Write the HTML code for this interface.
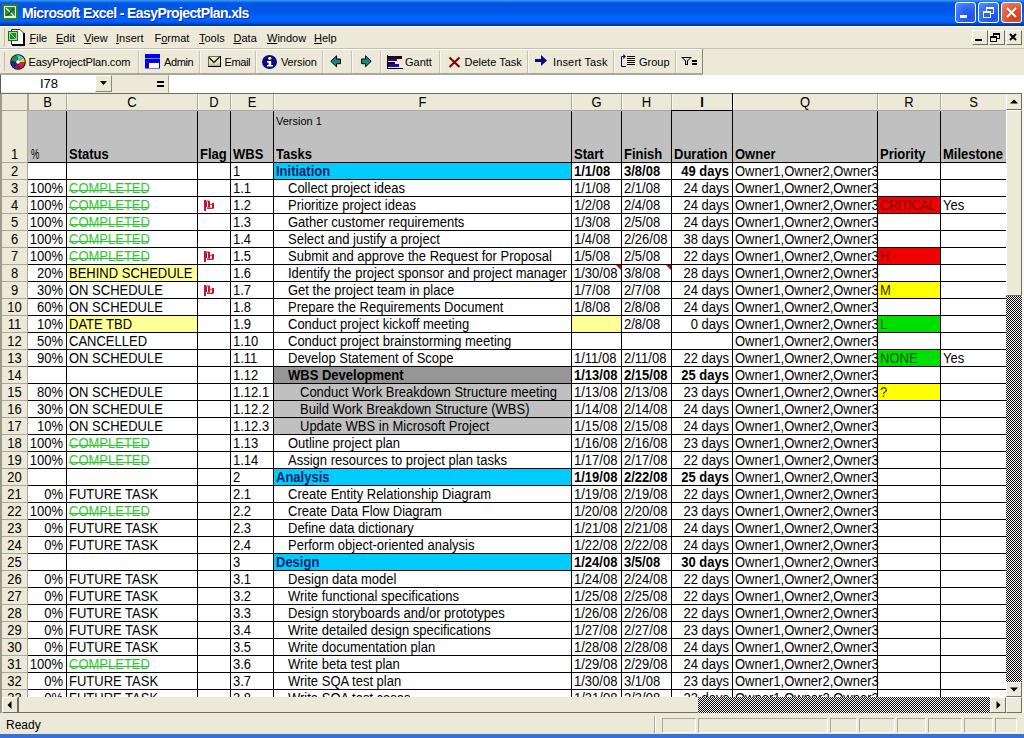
<!DOCTYPE html>
<html><head><meta charset="utf-8"><title>Microsoft Excel - EasyProjectPlan.xls</title>
<style>
html,body{margin:0;padding:0;}
body{width:1024px;height:738px;position:relative;overflow:hidden;background:#ECE9D8;font-family:"Liberation Sans", sans-serif;}
body>div,body>svg{position:absolute;}
.t{white-space:nowrap;color:#000;}
u{text-decoration:underline;text-underline-offset:1px;}
</style></head><body>
<div style="left:0;top:0;width:1024px;height:26px;background:linear-gradient(#3A9BFF 0px,#2A85F5 1px,#0A60E0 2.5px,#0055E0 4px,#0057E8 12px,#0064FF 17px,#0062FA 21px,#0050DD 23px,#003CB5 24.5px,#0030A0 26px);"></div>
<svg style="left:2px;top:4px" width="16" height="16" viewBox="0 0 16 16">
<rect x="0" y="0" width="16" height="16" fill="#2C7A3A"/>
<rect x="2" y="2" width="12" height="12" fill="#E6F2DC"/>
<rect x="3" y="3" width="10" height="10" fill="#2E8A3C"/>
<path d="M4 4 L12 12" stroke="#E6F2DC" stroke-width="1.3"/>
<path d="M4.5 12 L12 4.5" stroke="#1E5E28" stroke-width="1.5"/>
<rect x="3" y="12" width="10" height="2" fill="#E6F2DC"/>
</svg>
<div class="t" style="left:22px;top:4px;color:#fff;font-weight:bold;font-size:14px;line-height:19px;letter-spacing:-0.6px;text-shadow:1px 1px 0 #0A2A9A;">Microsoft Excel - EasyProjectPlan.xls</div>
<div style="left:955px;top:2px;width:21px;height:21px;border:1px solid #fff;border-radius:3px;background:radial-gradient(circle at 70% 75%,#1E50E8 0%,#2B64F2 45%,#5A90FF 100%);box-sizing:border-box;"></div>
<div style="left:978px;top:2px;width:21px;height:21px;border:1px solid #fff;border-radius:3px;background:radial-gradient(circle at 70% 75%,#1E50E8 0%,#2B64F2 45%,#5A90FF 100%);box-sizing:border-box;"></div>
<div style="left:1001px;top:2px;width:21px;height:21px;border:1px solid #fff;border-radius:3px;background:radial-gradient(circle at 70% 75%,#C8401E 0%,#E0583A 50%,#F08A70 100%);box-sizing:border-box;"></div>
<div style="left:960px;top:15px;width:7px;height:3px;background:#fff;"></div>
<svg style="left:982px;top:6px" width="13" height="13" viewBox="0 0 13 13"><rect x="4.5" y="1.5" width="7" height="6" fill="none" stroke="#fff" stroke-width="1"/><rect x="4" y="1" width="8" height="2" fill="#fff"/><rect x="1.5" y="5.5" width="7" height="6" fill="#2B64F2" stroke="#fff" stroke-width="1"/><rect x="1" y="5" width="8" height="2" fill="#fff"/></svg>
<svg style="left:1005px;top:6px" width="13" height="13" viewBox="0 0 13 13"><path d="M2 2 L11 11 M11 2 L2 11" stroke="#fff" stroke-width="2"/></svg>
<div style="left:0px;top:26px;width:1024px;height:23px;background:#ECE9D8;"></div>
<div style="left:0px;top:26px;width:1024px;height:1px;background:#FBFAF5;"></div>
<div style="left:0px;top:48px;width:1024px;height:1px;background:#C5C1AE;"></div>
<div style="left:4px;top:28px;width:1px;height:18px;background:#C1BDA8;"></div>
<div style="left:3px;top:45px;width:2px;height:1px;background:#C1BDA8;"></div>
<svg style="left:8px;top:29px" width="17" height="17" viewBox="0 0 17 17">
<path d="M3.5 0.5 H12 L15.5 4 V15.5 H3.5 Z" fill="#fff" stroke="#303030"/>
<rect x="4" y="15" width="12" height="2" fill="#000"/>
<rect x="15" y="4" width="2" height="13" fill="#000"/>
<rect x="0.5" y="2.5" width="9" height="9" fill="#9CE08C" stroke="#1E6B2A"/>
<rect x="2" y="4" width="6" height="6" fill="#1E8A2C"/>
<path d="M2 4 L8 10" stroke="#9CE08C" stroke-width="1"/>
</svg>
<div class="t" style="left:29.5px;top:31px;font-size:11px;line-height:14px;color:#000;"><u>F</u>ile</div>
<div class="t" style="left:56px;top:31px;font-size:11px;line-height:14px;color:#000;"><u>E</u>dit</div>
<div class="t" style="left:84px;top:31px;font-size:11px;line-height:14px;color:#000;"><u>V</u>iew</div>
<div class="t" style="left:116px;top:31px;font-size:11px;line-height:14px;color:#000;"><u>I</u>nsert</div>
<div class="t" style="left:154.5px;top:31px;font-size:11px;line-height:14px;color:#000;">F<u>o</u>rmat</div>
<div class="t" style="left:199px;top:31px;font-size:11px;line-height:14px;color:#000;"><u>T</u>ools</div>
<div class="t" style="left:233.5px;top:31px;font-size:11px;line-height:14px;color:#000;"><u>D</u>ata</div>
<div class="t" style="left:267px;top:31px;font-size:11px;line-height:14px;color:#000;"><u>W</u>indow</div>
<div class="t" style="left:314px;top:31px;font-size:11px;line-height:14px;color:#000;"><u>H</u>elp</div>
<div style="left:972px;top:30px;width:16px;height:15px;background:#ECE9D8;border-top:1px solid #fff;border-left:1px solid #fff;border-right:1px solid #716F64;border-bottom:1px solid #716F64;box-sizing:border-box;"></div>
<div style="left:989px;top:30px;width:16px;height:15px;background:#ECE9D8;border-top:1px solid #fff;border-left:1px solid #fff;border-right:1px solid #716F64;border-bottom:1px solid #716F64;box-sizing:border-box;"></div>
<div style="left:1006px;top:30px;width:16px;height:15px;background:#ECE9D8;border-top:1px solid #fff;border-left:1px solid #fff;border-right:1px solid #716F64;border-bottom:1px solid #716F64;box-sizing:border-box;"></div>
<div style="left:975px;top:39px;width:7px;height:2px;background:#000;"></div>
<svg style="left:990px;top:33px" width="10" height="9" viewBox="0 0 10 9"><rect x="3.5" y="0.5" width="6" height="5" fill="none" stroke="#000"/><rect x="3" y="0" width="7" height="2" fill="#000"/><rect x="0.5" y="3.5" width="6" height="5" fill="#ECE9D8" stroke="#000"/><rect x="0" y="3" width="7" height="2" fill="#000"/></svg>
<svg style="left:1009px;top:33px" width="8" height="8" viewBox="0 0 8 8"><path d="M1 1 L7 7 M7 1 L1 7" stroke="#000" stroke-width="2"/></svg>
<div style="left:0px;top:49px;width:702px;height:25px;background:#ECE9D8;border-top:1px solid #fff;border-bottom:1px solid #ACA899;box-sizing:border-box;"></div>
<div style="left:702px;top:49px;width:322px;height:25px;background:#ECE9D8;"></div>
<div style="left:702px;top:49px;width:1px;height:26px;background:#8C8975;"></div>
<div style="left:4px;top:52px;width:1px;height:19px;background:#C1BDA8;"></div>
<div style="left:138px;top:51px;width:1px;height:22px;background:#C5C2B2;"></div>
<div style="left:139px;top:51px;width:1px;height:22px;background:#FAF9F4;"></div>
<div style="left:199px;top:51px;width:1px;height:22px;background:#C5C2B2;"></div>
<div style="left:200px;top:51px;width:1px;height:22px;background:#FAF9F4;"></div>
<div style="left:255px;top:51px;width:1px;height:22px;background:#C5C2B2;"></div>
<div style="left:256px;top:51px;width:1px;height:22px;background:#FAF9F4;"></div>
<div style="left:322px;top:51px;width:1px;height:22px;background:#C5C2B2;"></div>
<div style="left:323px;top:51px;width:1px;height:22px;background:#FAF9F4;"></div>
<div style="left:351px;top:51px;width:1px;height:22px;background:#C5C2B2;"></div>
<div style="left:352px;top:51px;width:1px;height:22px;background:#FAF9F4;"></div>
<div style="left:380px;top:51px;width:1px;height:22px;background:#C5C2B2;"></div>
<div style="left:381px;top:51px;width:1px;height:22px;background:#FAF9F4;"></div>
<div style="left:439px;top:51px;width:1px;height:22px;background:#C5C2B2;"></div>
<div style="left:440px;top:51px;width:1px;height:22px;background:#FAF9F4;"></div>
<div style="left:527px;top:51px;width:1px;height:22px;background:#C5C2B2;"></div>
<div style="left:528px;top:51px;width:1px;height:22px;background:#FAF9F4;"></div>
<div style="left:613px;top:51px;width:1px;height:22px;background:#C5C2B2;"></div>
<div style="left:614px;top:51px;width:1px;height:22px;background:#FAF9F4;"></div>
<div style="left:675px;top:51px;width:1px;height:22px;background:#C5C2B2;"></div>
<div style="left:676px;top:51px;width:1px;height:22px;background:#FAF9F4;"></div>
<svg style="left:10px;top:54px" width="16" height="16" viewBox="0 0 16 16">
<circle cx="8" cy="8" r="7.8" fill="#000"/>
<path d="M8 8 L7 1 A7 7 0 0 1 13.5 3.8 Z" fill="#33D0E0"/>
<path d="M8 8 L13.5 3.8 A7 7 0 0 1 14.8 8 Z" fill="#F0D820"/>
<path d="M8 8 L14.8 8 A7 7 0 0 1 10 14.7 Z" fill="#D02040"/>
<path d="M8 8 L10 14.7 A7 7 0 0 1 4 13.8 Z" fill="#901850"/>
<path d="M8 8 L4 13.8 A7 7 0 0 1 1.2 7 Z" fill="#2020A8"/>
<path d="M8 8 L1.2 7 A7 7 0 0 1 7 1 Z" fill="#20903A"/>
<circle cx="8" cy="8" r="1.8" fill="#fff"/>
</svg>
<div class="t" style="left:28.5px;top:55px;font-size:11px;line-height:14px;color:#000;letter-spacing:-0.15px;">EasyProjectPlan.com</div>
<svg style="left:145px;top:54px" width="15" height="15" viewBox="0 0 15 15"><rect x="0" y="0" width="15" height="14.5" fill="#0000F0"/><rect x="0" y="4" width="15" height="1" fill="#8080FF"/><rect x="4" y="9" width="10" height="5" fill="#fff"/></svg>
<div class="t" style="left:164px;top:55px;font-size:11px;line-height:14px;color:#000;letter-spacing:-0.4px;">Admin</div>
<svg style="left:208px;top:56px" width="13" height="11" viewBox="0 0 13 11"><defs><linearGradient id="em" x1="0" y1="0" x2="0" y2="1"><stop offset="0" stop-color="#F4F4C8"/><stop offset="0.6" stop-color="#E4E4B8"/><stop offset="1" stop-color="#A0A090"/></linearGradient></defs><rect x="0" y="0" width="13" height="11" fill="url(#em)"/><path d="M0.5 10.5 V0.5 H12" fill="none" stroke="#707060"/><rect x="12" y="0" width="1.2" height="11" fill="#000"/><rect x="0" y="10" width="13" height="1.2" fill="#000"/><path d="M1 1.5 L6 6.5 L11.5 1" fill="none" stroke="#000" stroke-width="1.1"/></svg>
<div class="t" style="left:224.5px;top:55px;font-size:11px;line-height:14px;color:#000;letter-spacing:-0.4px;">Email</div>
<svg style="left:262px;top:55px" width="15" height="14" viewBox="0 0 15 14"><ellipse cx="7.5" cy="7" rx="7.5" ry="7" fill="#0A0A80"/><ellipse cx="7.8" cy="3.4" rx="1.6" ry="1.3" fill="#fff"/><path d="M5 6 H9.2 V10 H11 V11.6 H5 V10 H6.5 V7.4 H5 Z" fill="#fff"/></svg>
<div class="t" style="left:281px;top:55px;font-size:11px;line-height:14px;color:#000;letter-spacing:-0.15px;">Version</div>
<svg style="left:330px;top:55px" width="12" height="13" viewBox="0 0 12 13"><path d="M0.8 6.3 L6.5 0.8 V4 H10.5 V8.7 H6.5 V11.8 Z" fill="#108888" stroke="#000" stroke-width="1"/></svg>
<svg style="left:360px;top:55px" width="12" height="13" viewBox="0 0 12 13"><path d="M11.2 6.3 L5.5 0.8 V4 H1.5 V8.7 H5.5 V11.8 Z" fill="#108888" stroke="#000" stroke-width="1"/></svg>
<svg style="left:387px;top:55px" width="17" height="14" viewBox="0 0 17 14"><rect x="0" y="0" width="1" height="14" fill="#000"/><rect x="1" y="1" width="14" height="3" fill="#2A0010"/><rect x="1" y="4" width="9" height="2" fill="#1A10A0"/><rect x="1" y="7" width="7" height="2" fill="#2A0010"/><rect x="1" y="9" width="11" height="3" fill="#1A10A0"/><rect x="0" y="13" width="16" height="1" fill="#000"/></svg>
<div class="t" style="left:405px;top:55px;font-size:11px;line-height:14px;color:#000;">Gantt</div>
<svg style="left:448px;top:56px" width="13" height="12" viewBox="0 0 13 12"><path d="M1.5 1.5 L11.5 11 M11.5 1.5 L1.5 11" stroke="#7A0000" stroke-width="2"/></svg>
<div class="t" style="left:464.5px;top:55px;font-size:11px;line-height:14px;color:#000;">Delete Task</div>
<svg style="left:535px;top:55px" width="13" height="11" viewBox="0 0 13 11"><path d="M0 4 H6 V0 L12 5.5 L6 11 V7 H0 Z" fill="#0A0A80"/></svg>
<div class="t" style="left:553px;top:55px;font-size:11px;line-height:14px;color:#000;letter-spacing:0.15px;">Insert Task</div>
<svg style="left:620px;top:53px" width="16" height="15" viewBox="0 0 16 15"><path d="M1.5 13.5 V3.5 H4" fill="none" stroke="#0A0A50" stroke-width="1"/><path d="M1.5 13.5 H6" fill="none" stroke="#0A0A50" stroke-width="1"/><path d="M3.3 1 L6 3.5 L3.3 6 Z" fill="#0A0A50"/><rect x="7" y="3" width="8" height="1" fill="#000"/><rect x="7" y="5" width="8" height="1" fill="#000"/><rect x="7" y="7" width="8" height="1" fill="#000"/><rect x="7" y="9" width="8" height="1" fill="#000"/><rect x="7" y="11" width="8" height="1" fill="#000"/></svg>
<div class="t" style="left:639px;top:55px;font-size:11px;line-height:14px;color:#000;">Group</div>
<svg style="left:681px;top:56px" width="16" height="10" viewBox="0 0 16 10"><path d="M0 1 H11 L7 5 V9 H4 V5 Z" fill="#000"/><path d="M2 2 H9 L6 4.8 V8 H5 V4.8 Z" fill="#D8D8D8"/><rect x="11" y="4" width="5" height="2" fill="#000"/><rect x="11" y="7" width="5" height="2" fill="#000"/></svg>
<div style="left:0px;top:74px;width:1024px;height:19px;background:#ECE9D8;"></div>
<div style="left:0px;top:74px;width:702px;height:1px;background:#ACA899;"></div>
<div style="left:1px;top:75px;width:95px;height:17px;background:#fff;"></div>
<div style="left:0px;top:75px;width:1px;height:18px;background:#5A5850;"></div>
<div class="t" style="left:40px;top:76px;font-size:13px;line-height:16px;color:#000;">I78</div>
<div style="left:95px;top:75px;width:17px;height:17px;background:#ECE9D8;border-top:1px solid #fff;border-left:1px solid #fff;border-right:1px solid #8C8975;border-bottom:1px solid #8C8975;box-sizing:border-box;"></div>
<svg style="left:100px;top:81px" width="7" height="4" viewBox="0 0 7 4"><path d="M0 0 H7 L3.5 4 Z" fill="#000"/></svg>
<div style="left:157px;top:81px;width:7px;height:2px;background:#000;"></div>
<div style="left:157px;top:85px;width:7px;height:2px;background:#000;"></div>
<div style="left:168px;top:75px;width:856px;height:18px;background:#fff;"></div>
<div style="left:168px;top:75px;width:1px;height:18px;background:#ACA899;"></div>
<div style="left:0px;top:93px;width:1006px;height:604px;background:#fff;"></div>
<div style="left:0px;top:93px;width:2px;height:620px;background:#9D9A8A;"></div>
<div style="left:0px;top:93px;width:1024px;height:1px;background:#716F64;"></div>
<div style="left:2px;top:94px;width:1004px;height:16px;background:#ECE9D8;"></div>
<div style="left:2px;top:110px;width:1004px;height:1px;background:#ACA899;"></div>
<div style="left:2px;top:111px;width:25px;height:586px;background:#ECE9D8;"></div>
<div style="left:27px;top:94px;width:2px;height:17px;background:#ACA899;"></div>
<div style="left:27px;top:111px;width:1px;height:586px;background:#ACA899;"></div>
<div class="t" style="left:29px;top:95px;width:37px;font-size:13px;line-height:16px;text-align:center;transform:scaleY(1.1);transform-origin:0 12px;">B</div>
<div style="left:66px;top:94px;width:1px;height:16px;background:#ACA899;"></div>
<div style="left:67px;top:94px;width:1px;height:16px;background:#FAF9F2;"></div>
<div class="t" style="left:67px;top:95px;width:130px;font-size:13px;line-height:16px;text-align:center;transform:scaleY(1.1);transform-origin:0 12px;">C</div>
<div style="left:197px;top:94px;width:1px;height:16px;background:#ACA899;"></div>
<div style="left:198px;top:94px;width:1px;height:16px;background:#FAF9F2;"></div>
<div class="t" style="left:198px;top:95px;width:32px;font-size:13px;line-height:16px;text-align:center;transform:scaleY(1.1);transform-origin:0 12px;">D</div>
<div style="left:230px;top:94px;width:1px;height:16px;background:#ACA899;"></div>
<div style="left:231px;top:94px;width:1px;height:16px;background:#FAF9F2;"></div>
<div class="t" style="left:231px;top:95px;width:42px;font-size:13px;line-height:16px;text-align:center;transform:scaleY(1.1);transform-origin:0 12px;">E</div>
<div style="left:273px;top:94px;width:1px;height:16px;background:#ACA899;"></div>
<div style="left:274px;top:94px;width:1px;height:16px;background:#FAF9F2;"></div>
<div class="t" style="left:274px;top:95px;width:297px;font-size:13px;line-height:16px;text-align:center;transform:scaleY(1.1);transform-origin:0 12px;">F</div>
<div style="left:571px;top:94px;width:1px;height:16px;background:#ACA899;"></div>
<div style="left:572px;top:94px;width:1px;height:16px;background:#FAF9F2;"></div>
<div class="t" style="left:572px;top:95px;width:49px;font-size:13px;line-height:16px;text-align:center;transform:scaleY(1.1);transform-origin:0 12px;">G</div>
<div style="left:621px;top:94px;width:1px;height:16px;background:#ACA899;"></div>
<div style="left:622px;top:94px;width:1px;height:16px;background:#FAF9F2;"></div>
<div class="t" style="left:622px;top:95px;width:49px;font-size:13px;line-height:16px;text-align:center;transform:scaleY(1.1);transform-origin:0 12px;">H</div>
<div style="left:671px;top:94px;width:1px;height:16px;background:#ACA899;"></div>
<div style="left:672px;top:94px;width:1px;height:16px;background:#FAF9F2;"></div>
<div class="t" style="left:672px;top:95px;width:60px;font-size:13px;line-height:16px;text-align:center;transform:scaleY(1.1);transform-origin:0 12px;font-weight:bold;">I</div>
<div style="left:732px;top:94px;width:1px;height:16px;background:#ACA899;"></div>
<div style="left:733px;top:94px;width:1px;height:16px;background:#FAF9F2;"></div>
<div class="t" style="left:733px;top:95px;width:144px;font-size:13px;line-height:16px;text-align:center;transform:scaleY(1.1);transform-origin:0 12px;">Q</div>
<div style="left:877px;top:94px;width:1px;height:16px;background:#ACA899;"></div>
<div style="left:878px;top:94px;width:1px;height:16px;background:#FAF9F2;"></div>
<div class="t" style="left:878px;top:95px;width:62px;font-size:13px;line-height:16px;text-align:center;transform:scaleY(1.1);transform-origin:0 12px;">R</div>
<div style="left:940px;top:94px;width:1px;height:16px;background:#ACA899;"></div>
<div style="left:941px;top:94px;width:1px;height:16px;background:#FAF9F2;"></div>
<div class="t" style="left:941px;top:95px;width:65px;font-size:13px;line-height:16px;text-align:center;transform:scaleY(1.1);transform-origin:0 12px;">S</div>
<div style="left:671px;top:110px;width:62px;height:1px;background:#000;"></div>
<div style="left:732px;top:93px;width:1px;height:18px;background:#000;"></div>
<div style="left:28px;top:111px;width:978px;height:51px;background:#C0C0C0;"></div>
<div class="t" style="left:31px;top:146px;font-size:13px;line-height:17px;color:#000;transform:scaleY(1.1);transform-origin:0 13px;transform:scale(0.72,1.1);transform-origin:0 13px;">%</div>
<div class="t" style="left:69px;top:146px;font-size:13px;line-height:17px;color:#000;transform:scaleY(1.1);transform-origin:0 13px;font-weight:bold;">Status</div>
<div class="t" style="left:200px;top:146px;font-size:13px;line-height:17px;color:#000;transform:scaleY(1.1);transform-origin:0 13px;font-weight:bold;">Flag</div>
<div class="t" style="left:233px;top:146px;font-size:13px;line-height:17px;color:#000;transform:scaleY(1.1);transform-origin:0 13px;font-weight:bold;">WBS</div>
<div class="t" style="left:276px;top:146px;font-size:13px;line-height:17px;color:#000;transform:scaleY(1.1);transform-origin:0 13px;font-weight:bold;">Tasks</div>
<div class="t" style="left:574px;top:146px;font-size:13px;line-height:17px;color:#000;transform:scaleY(1.1);transform-origin:0 13px;font-weight:bold;">Start</div>
<div class="t" style="left:624px;top:146px;font-size:13px;line-height:17px;color:#000;transform:scaleY(1.1);transform-origin:0 13px;font-weight:bold;">Finish</div>
<div class="t" style="left:674px;top:146px;font-size:13px;line-height:17px;color:#000;transform:scaleY(1.1);transform-origin:0 13px;font-weight:bold;">Duration</div>
<div class="t" style="left:735px;top:146px;font-size:13px;line-height:17px;color:#000;transform:scaleY(1.1);transform-origin:0 13px;font-weight:bold;">Owner</div>
<div class="t" style="left:880px;top:146px;font-size:13px;line-height:17px;color:#000;transform:scaleY(1.1);transform-origin:0 13px;font-weight:bold;">Priority</div>
<div class="t" style="left:943px;top:146px;font-size:13px;line-height:17px;color:#000;transform:scaleY(1.1);transform-origin:0 13px;font-weight:bold;">Milestone</div>
<div class="t" style="left:276px;top:114px;font-size:11px;line-height:14px;">Version 1</div>
<div class="t" style="left:2px;top:146px;width:25px;font-size:13px;line-height:17px;color:#000;transform:scaleY(1.1);transform-origin:0 13px;text-align:center;">1</div>
<div class="t" style="left:2px;top:163px;width:25px;font-size:13px;line-height:17px;color:#000;transform:scaleY(1.1);transform-origin:0 13px;text-align:center;">2</div>
<div class="t" style="left:233px;top:163px;font-size:13px;line-height:17px;color:#000;transform:scaleY(1.1);transform-origin:0 13px;">1</div>
<div style="left:274px;top:163px;width:297px;height:16px;background:#00CCFF;"></div>
<div class="t" style="left:276px;top:163px;font-size:13px;line-height:17px;color:#000;transform:scaleY(1.1);transform-origin:0 13px;font-weight:bold;color:#001F60;">Initiation</div>
<div class="t" style="left:574px;top:163px;font-size:13px;line-height:17px;color:#000;transform:scaleY(1.1);transform-origin:0 13px;font-weight:bold;">1/1/08</div>
<div class="t" style="left:624px;top:163px;font-size:13px;line-height:17px;color:#000;transform:scaleY(1.1);transform-origin:0 13px;font-weight:bold;">3/8/08</div>
<div class="t" style="left:671px;top:163px;width:58px;font-size:13px;line-height:17px;color:#000;transform:scaleY(1.1);transform-origin:0 13px;font-weight:bold;text-align:right;">49 days</div>
<div class="t" style="left:735px;top:163px;font-size:13px;line-height:17px;color:#000;transform:scaleY(1.1);transform-origin:0 13px;">Owner1,Owner2,Owner3</div>
<div class="t" style="left:2px;top:180px;width:25px;font-size:13px;line-height:17px;color:#000;transform:scaleY(1.1);transform-origin:0 13px;text-align:center;">3</div>
<div class="t" style="left:28px;top:180px;width:35px;font-size:13px;line-height:17px;color:#000;transform:scaleY(1.1);transform-origin:0 13px;text-align:right;">100%</div>
<div class="t" style="left:69px;top:180px;font-size:13px;line-height:17px;color:#000;transform:scaleY(1.1);transform-origin:0 13px;color:#33C833;">COMPLETED</div>
<div style="left:69px;top:190px;width:80px;height:1px;background:#33C833;"></div>
<div class="t" style="left:233px;top:180px;font-size:13px;line-height:17px;color:#000;transform:scaleY(1.1);transform-origin:0 13px;">1.1</div>
<div class="t" style="left:288px;top:180px;font-size:13px;line-height:17px;color:#000;transform:scaleY(1.1);transform-origin:0 13px;">Collect project ideas</div>
<div class="t" style="left:574px;top:180px;font-size:13px;line-height:17px;color:#000;transform:scaleY(1.1);transform-origin:0 13px;">1/1/08</div>
<div class="t" style="left:624px;top:180px;font-size:13px;line-height:17px;color:#000;transform:scaleY(1.1);transform-origin:0 13px;">2/1/08</div>
<div class="t" style="left:671px;top:180px;width:58px;font-size:13px;line-height:17px;color:#000;transform:scaleY(1.1);transform-origin:0 13px;text-align:right;">24 days</div>
<div class="t" style="left:735px;top:180px;font-size:13px;line-height:17px;color:#000;transform:scaleY(1.1);transform-origin:0 13px;">Owner1,Owner2,Owner3</div>
<div class="t" style="left:2px;top:197px;width:25px;font-size:13px;line-height:17px;color:#000;transform:scaleY(1.1);transform-origin:0 13px;text-align:center;">4</div>
<div class="t" style="left:28px;top:197px;width:35px;font-size:13px;line-height:17px;color:#000;transform:scaleY(1.1);transform-origin:0 13px;text-align:right;">100%</div>
<div class="t" style="left:69px;top:197px;font-size:13px;line-height:17px;color:#000;transform:scaleY(1.1);transform-origin:0 13px;color:#33C833;">COMPLETED</div>
<div style="left:69px;top:207px;width:80px;height:1px;background:#33C833;"></div>
<svg style="left:200px;top:197px" width="18" height="16" viewBox="0 0 18 16"><rect x="4" y="3" width="2" height="11" fill="#D0103A"/><rect x="6" y="3.6" width="3.5" height="1" fill="#A01028"/><rect x="8" y="4" width="2" height="6" fill="#D0103A"/><rect x="6" y="5" width="1" height="5" fill="#B01030"/><rect x="7" y="10.4" width="6" height="1.4" fill="#901020"/><rect x="10" y="6.8" width="2.5" height="1" fill="#A01028"/><rect x="12" y="6" width="2" height="5.5" fill="#D0103A"/><rect x="10" y="7.8" width="2" height="2.6" fill="#FFF2C0"/></svg>
<div class="t" style="left:233px;top:197px;font-size:13px;line-height:17px;color:#000;transform:scaleY(1.1);transform-origin:0 13px;">1.2</div>
<div class="t" style="left:288px;top:197px;font-size:13px;line-height:17px;color:#000;transform:scaleY(1.1);transform-origin:0 13px;">Prioritize project ideas</div>
<div class="t" style="left:574px;top:197px;font-size:13px;line-height:17px;color:#000;transform:scaleY(1.1);transform-origin:0 13px;">1/2/08</div>
<div class="t" style="left:624px;top:197px;font-size:13px;line-height:17px;color:#000;transform:scaleY(1.1);transform-origin:0 13px;">2/4/08</div>
<div class="t" style="left:671px;top:197px;width:58px;font-size:13px;line-height:17px;color:#000;transform:scaleY(1.1);transform-origin:0 13px;text-align:right;">24 days</div>
<div class="t" style="left:735px;top:197px;font-size:13px;line-height:17px;color:#000;transform:scaleY(1.1);transform-origin:0 13px;">Owner1,Owner2,Owner3</div>
<div style="left:878px;top:197px;width:62px;height:16px;background:#F00000;"></div>
<div class="t" style="left:880px;top:197px;font-size:13px;line-height:17px;color:#000;transform:scaleY(1.1);transform-origin:0 13px;color:#800000;letter-spacing:-0.5px;">CRITICAL</div>
<div class="t" style="left:943px;top:197px;font-size:13px;line-height:17px;color:#000;transform:scaleY(1.1);transform-origin:0 13px;">Yes</div>
<div class="t" style="left:2px;top:214px;width:25px;font-size:13px;line-height:17px;color:#000;transform:scaleY(1.1);transform-origin:0 13px;text-align:center;">5</div>
<div class="t" style="left:28px;top:214px;width:35px;font-size:13px;line-height:17px;color:#000;transform:scaleY(1.1);transform-origin:0 13px;text-align:right;">100%</div>
<div class="t" style="left:69px;top:214px;font-size:13px;line-height:17px;color:#000;transform:scaleY(1.1);transform-origin:0 13px;color:#33C833;">COMPLETED</div>
<div style="left:69px;top:224px;width:80px;height:1px;background:#33C833;"></div>
<div class="t" style="left:233px;top:214px;font-size:13px;line-height:17px;color:#000;transform:scaleY(1.1);transform-origin:0 13px;">1.3</div>
<div class="t" style="left:288px;top:214px;font-size:13px;line-height:17px;color:#000;transform:scaleY(1.1);transform-origin:0 13px;">Gather customer requirements</div>
<div class="t" style="left:574px;top:214px;font-size:13px;line-height:17px;color:#000;transform:scaleY(1.1);transform-origin:0 13px;">1/3/08</div>
<div class="t" style="left:624px;top:214px;font-size:13px;line-height:17px;color:#000;transform:scaleY(1.1);transform-origin:0 13px;">2/5/08</div>
<div class="t" style="left:671px;top:214px;width:58px;font-size:13px;line-height:17px;color:#000;transform:scaleY(1.1);transform-origin:0 13px;text-align:right;">24 days</div>
<div class="t" style="left:735px;top:214px;font-size:13px;line-height:17px;color:#000;transform:scaleY(1.1);transform-origin:0 13px;">Owner1,Owner2,Owner3</div>
<div class="t" style="left:2px;top:231px;width:25px;font-size:13px;line-height:17px;color:#000;transform:scaleY(1.1);transform-origin:0 13px;text-align:center;">6</div>
<div class="t" style="left:28px;top:231px;width:35px;font-size:13px;line-height:17px;color:#000;transform:scaleY(1.1);transform-origin:0 13px;text-align:right;">100%</div>
<div class="t" style="left:69px;top:231px;font-size:13px;line-height:17px;color:#000;transform:scaleY(1.1);transform-origin:0 13px;color:#33C833;">COMPLETED</div>
<div style="left:69px;top:241px;width:80px;height:1px;background:#33C833;"></div>
<div class="t" style="left:233px;top:231px;font-size:13px;line-height:17px;color:#000;transform:scaleY(1.1);transform-origin:0 13px;">1.4</div>
<div class="t" style="left:288px;top:231px;font-size:13px;line-height:17px;color:#000;transform:scaleY(1.1);transform-origin:0 13px;">Select and justify a project</div>
<div class="t" style="left:574px;top:231px;font-size:13px;line-height:17px;color:#000;transform:scaleY(1.1);transform-origin:0 13px;">1/4/08</div>
<div class="t" style="left:624px;top:231px;font-size:13px;line-height:17px;color:#000;transform:scaleY(1.1);transform-origin:0 13px;">2/26/08</div>
<div class="t" style="left:671px;top:231px;width:58px;font-size:13px;line-height:17px;color:#000;transform:scaleY(1.1);transform-origin:0 13px;text-align:right;">38 days</div>
<div class="t" style="left:735px;top:231px;font-size:13px;line-height:17px;color:#000;transform:scaleY(1.1);transform-origin:0 13px;">Owner1,Owner2,Owner3</div>
<div class="t" style="left:2px;top:248px;width:25px;font-size:13px;line-height:17px;color:#000;transform:scaleY(1.1);transform-origin:0 13px;text-align:center;">7</div>
<div class="t" style="left:28px;top:248px;width:35px;font-size:13px;line-height:17px;color:#000;transform:scaleY(1.1);transform-origin:0 13px;text-align:right;">100%</div>
<div class="t" style="left:69px;top:248px;font-size:13px;line-height:17px;color:#000;transform:scaleY(1.1);transform-origin:0 13px;color:#33C833;">COMPLETED</div>
<div style="left:69px;top:258px;width:80px;height:1px;background:#33C833;"></div>
<svg style="left:200px;top:248px" width="18" height="16" viewBox="0 0 18 16"><rect x="4" y="3" width="2" height="11" fill="#D0103A"/><rect x="6" y="3.6" width="3.5" height="1" fill="#A01028"/><rect x="8" y="4" width="2" height="6" fill="#D0103A"/><rect x="6" y="5" width="1" height="5" fill="#B01030"/><rect x="7" y="10.4" width="6" height="1.4" fill="#901020"/><rect x="10" y="6.8" width="2.5" height="1" fill="#A01028"/><rect x="12" y="6" width="2" height="5.5" fill="#D0103A"/><rect x="10" y="7.8" width="2" height="2.6" fill="#FFF2C0"/></svg>
<div class="t" style="left:233px;top:248px;font-size:13px;line-height:17px;color:#000;transform:scaleY(1.1);transform-origin:0 13px;">1.5</div>
<div class="t" style="left:288px;top:248px;font-size:13px;line-height:17px;color:#000;transform:scaleY(1.1);transform-origin:0 13px;">Submit and approve the Request for Proposal</div>
<div class="t" style="left:574px;top:248px;font-size:13px;line-height:17px;color:#000;transform:scaleY(1.1);transform-origin:0 13px;">1/5/08</div>
<div class="t" style="left:624px;top:248px;font-size:13px;line-height:17px;color:#000;transform:scaleY(1.1);transform-origin:0 13px;">2/5/08</div>
<div class="t" style="left:671px;top:248px;width:58px;font-size:13px;line-height:17px;color:#000;transform:scaleY(1.1);transform-origin:0 13px;text-align:right;">22 days</div>
<div class="t" style="left:735px;top:248px;font-size:13px;line-height:17px;color:#000;transform:scaleY(1.1);transform-origin:0 13px;">Owner1,Owner2,Owner3</div>
<div style="left:878px;top:248px;width:62px;height:16px;background:#F00000;"></div>
<div class="t" style="left:880px;top:248px;font-size:13px;line-height:17px;color:#000;transform:scaleY(1.1);transform-origin:0 13px;color:#800000;">H</div>
<div class="t" style="left:2px;top:265px;width:25px;font-size:13px;line-height:17px;color:#000;transform:scaleY(1.1);transform-origin:0 13px;text-align:center;">8</div>
<div class="t" style="left:28px;top:265px;width:35px;font-size:13px;line-height:17px;color:#000;transform:scaleY(1.1);transform-origin:0 13px;text-align:right;">20%</div>
<div style="left:67px;top:265px;width:130px;height:16px;background:#FFFF99;"></div>
<div class="t" style="left:69px;top:265px;font-size:13px;line-height:17px;color:#000;transform:scaleY(1.1);transform-origin:0 13px;">BEHIND SCHEDULE</div>
<div class="t" style="left:233px;top:265px;font-size:13px;line-height:17px;color:#000;transform:scaleY(1.1);transform-origin:0 13px;">1.6</div>
<div class="t" style="left:288px;top:265px;font-size:13px;line-height:17px;color:#000;transform:scaleY(1.1);transform-origin:0 13px;">Identify the project sponsor and project manager</div>
<div class="t" style="left:574px;top:265px;font-size:13px;line-height:17px;color:#000;transform:scaleY(1.1);transform-origin:0 13px;">1/30/08</div>
<div class="t" style="left:624px;top:265px;font-size:13px;line-height:17px;color:#000;transform:scaleY(1.1);transform-origin:0 13px;">3/8/08</div>
<div class="t" style="left:671px;top:265px;width:58px;font-size:13px;line-height:17px;color:#000;transform:scaleY(1.1);transform-origin:0 13px;text-align:right;">28 days</div>
<div class="t" style="left:735px;top:265px;font-size:13px;line-height:17px;color:#000;transform:scaleY(1.1);transform-origin:0 13px;">Owner1,Owner2,Owner3</div>
<svg style="left:616px;top:265px" width="5" height="5" viewBox="0 0 5 5"><path d="M0 0 H5 V5 Z" fill="#C00000"/></svg>
<svg style="left:666px;top:265px" width="5" height="5" viewBox="0 0 5 5"><path d="M0 0 H5 V5 Z" fill="#C00000"/></svg>
<div class="t" style="left:2px;top:282px;width:25px;font-size:13px;line-height:17px;color:#000;transform:scaleY(1.1);transform-origin:0 13px;text-align:center;">9</div>
<div class="t" style="left:28px;top:282px;width:35px;font-size:13px;line-height:17px;color:#000;transform:scaleY(1.1);transform-origin:0 13px;text-align:right;">30%</div>
<div class="t" style="left:69px;top:282px;font-size:13px;line-height:17px;color:#000;transform:scaleY(1.1);transform-origin:0 13px;">ON SCHEDULE</div>
<svg style="left:200px;top:282px" width="18" height="16" viewBox="0 0 18 16"><rect x="4" y="3" width="2" height="11" fill="#D0103A"/><rect x="6" y="3.6" width="3.5" height="1" fill="#A01028"/><rect x="8" y="4" width="2" height="6" fill="#D0103A"/><rect x="6" y="5" width="1" height="5" fill="#B01030"/><rect x="7" y="10.4" width="6" height="1.4" fill="#901020"/><rect x="10" y="6.8" width="2.5" height="1" fill="#A01028"/><rect x="12" y="6" width="2" height="5.5" fill="#D0103A"/><rect x="10" y="7.8" width="2" height="2.6" fill="#FFF2C0"/></svg>
<div class="t" style="left:233px;top:282px;font-size:13px;line-height:17px;color:#000;transform:scaleY(1.1);transform-origin:0 13px;">1.7</div>
<div class="t" style="left:288px;top:282px;font-size:13px;line-height:17px;color:#000;transform:scaleY(1.1);transform-origin:0 13px;">Get the project team in place</div>
<div class="t" style="left:574px;top:282px;font-size:13px;line-height:17px;color:#000;transform:scaleY(1.1);transform-origin:0 13px;">1/7/08</div>
<div class="t" style="left:624px;top:282px;font-size:13px;line-height:17px;color:#000;transform:scaleY(1.1);transform-origin:0 13px;">2/7/08</div>
<div class="t" style="left:671px;top:282px;width:58px;font-size:13px;line-height:17px;color:#000;transform:scaleY(1.1);transform-origin:0 13px;text-align:right;">24 days</div>
<div class="t" style="left:735px;top:282px;font-size:13px;line-height:17px;color:#000;transform:scaleY(1.1);transform-origin:0 13px;">Owner1,Owner2,Owner3</div>
<div style="left:878px;top:282px;width:62px;height:16px;background:#FFFF00;"></div>
<div class="t" style="left:880px;top:282px;font-size:13px;line-height:17px;color:#000;transform:scaleY(1.1);transform-origin:0 13px;color:#333300;">M</div>
<div class="t" style="left:2px;top:299px;width:25px;font-size:13px;line-height:17px;color:#000;transform:scaleY(1.1);transform-origin:0 13px;text-align:center;">10</div>
<div class="t" style="left:28px;top:299px;width:35px;font-size:13px;line-height:17px;color:#000;transform:scaleY(1.1);transform-origin:0 13px;text-align:right;">60%</div>
<div class="t" style="left:69px;top:299px;font-size:13px;line-height:17px;color:#000;transform:scaleY(1.1);transform-origin:0 13px;">ON SCHEDULE</div>
<div class="t" style="left:233px;top:299px;font-size:13px;line-height:17px;color:#000;transform:scaleY(1.1);transform-origin:0 13px;">1.8</div>
<div class="t" style="left:288px;top:299px;font-size:13px;line-height:17px;color:#000;transform:scaleY(1.1);transform-origin:0 13px;">Prepare the Requirements Document</div>
<div class="t" style="left:574px;top:299px;font-size:13px;line-height:17px;color:#000;transform:scaleY(1.1);transform-origin:0 13px;">1/8/08</div>
<div class="t" style="left:624px;top:299px;font-size:13px;line-height:17px;color:#000;transform:scaleY(1.1);transform-origin:0 13px;">2/8/08</div>
<div class="t" style="left:671px;top:299px;width:58px;font-size:13px;line-height:17px;color:#000;transform:scaleY(1.1);transform-origin:0 13px;text-align:right;">24 days</div>
<div class="t" style="left:735px;top:299px;font-size:13px;line-height:17px;color:#000;transform:scaleY(1.1);transform-origin:0 13px;">Owner1,Owner2,Owner3</div>
<div class="t" style="left:2px;top:316px;width:25px;font-size:13px;line-height:17px;color:#000;transform:scaleY(1.1);transform-origin:0 13px;text-align:center;">11</div>
<div class="t" style="left:28px;top:316px;width:35px;font-size:13px;line-height:17px;color:#000;transform:scaleY(1.1);transform-origin:0 13px;text-align:right;">10%</div>
<div style="left:67px;top:316px;width:130px;height:16px;background:#FFFF99;"></div>
<div class="t" style="left:69px;top:316px;font-size:13px;line-height:17px;color:#000;transform:scaleY(1.1);transform-origin:0 13px;">DATE TBD</div>
<div class="t" style="left:233px;top:316px;font-size:13px;line-height:17px;color:#000;transform:scaleY(1.1);transform-origin:0 13px;">1.9</div>
<div class="t" style="left:288px;top:316px;font-size:13px;line-height:17px;color:#000;transform:scaleY(1.1);transform-origin:0 13px;">Conduct project kickoff meeting</div>
<div style="left:572px;top:316px;width:49px;height:16px;background:#FFFF99;"></div>
<div class="t" style="left:624px;top:316px;font-size:13px;line-height:17px;color:#000;transform:scaleY(1.1);transform-origin:0 13px;">2/8/08</div>
<div class="t" style="left:671px;top:316px;width:58px;font-size:13px;line-height:17px;color:#000;transform:scaleY(1.1);transform-origin:0 13px;text-align:right;">0 days</div>
<div class="t" style="left:735px;top:316px;font-size:13px;line-height:17px;color:#000;transform:scaleY(1.1);transform-origin:0 13px;">Owner1,Owner2,Owner3</div>
<div style="left:878px;top:316px;width:62px;height:16px;background:#00E000;"></div>
<div class="t" style="left:880px;top:316px;font-size:13px;line-height:17px;color:#000;transform:scaleY(1.1);transform-origin:0 13px;color:#005500;">L</div>
<div class="t" style="left:2px;top:333px;width:25px;font-size:13px;line-height:17px;color:#000;transform:scaleY(1.1);transform-origin:0 13px;text-align:center;">12</div>
<div class="t" style="left:28px;top:333px;width:35px;font-size:13px;line-height:17px;color:#000;transform:scaleY(1.1);transform-origin:0 13px;text-align:right;">50%</div>
<div class="t" style="left:69px;top:333px;font-size:13px;line-height:17px;color:#000;transform:scaleY(1.1);transform-origin:0 13px;">CANCELLED</div>
<div class="t" style="left:233px;top:333px;font-size:13px;line-height:17px;color:#000;transform:scaleY(1.1);transform-origin:0 13px;">1.10</div>
<div class="t" style="left:288px;top:333px;font-size:13px;line-height:17px;color:#000;transform:scaleY(1.1);transform-origin:0 13px;">Conduct project brainstorming meeting</div>
<div class="t" style="left:735px;top:333px;font-size:13px;line-height:17px;color:#000;transform:scaleY(1.1);transform-origin:0 13px;">Owner1,Owner2,Owner3</div>
<div class="t" style="left:2px;top:350px;width:25px;font-size:13px;line-height:17px;color:#000;transform:scaleY(1.1);transform-origin:0 13px;text-align:center;">13</div>
<div class="t" style="left:28px;top:350px;width:35px;font-size:13px;line-height:17px;color:#000;transform:scaleY(1.1);transform-origin:0 13px;text-align:right;">90%</div>
<div class="t" style="left:69px;top:350px;font-size:13px;line-height:17px;color:#000;transform:scaleY(1.1);transform-origin:0 13px;">ON SCHEDULE</div>
<div class="t" style="left:233px;top:350px;font-size:13px;line-height:17px;color:#000;transform:scaleY(1.1);transform-origin:0 13px;">1.11</div>
<div class="t" style="left:288px;top:350px;font-size:13px;line-height:17px;color:#000;transform:scaleY(1.1);transform-origin:0 13px;">Develop Statement of Scope</div>
<div class="t" style="left:574px;top:350px;font-size:13px;line-height:17px;color:#000;transform:scaleY(1.1);transform-origin:0 13px;">1/11/08</div>
<div class="t" style="left:624px;top:350px;font-size:13px;line-height:17px;color:#000;transform:scaleY(1.1);transform-origin:0 13px;">2/11/08</div>
<div class="t" style="left:671px;top:350px;width:58px;font-size:13px;line-height:17px;color:#000;transform:scaleY(1.1);transform-origin:0 13px;text-align:right;">22 days</div>
<div class="t" style="left:735px;top:350px;font-size:13px;line-height:17px;color:#000;transform:scaleY(1.1);transform-origin:0 13px;">Owner1,Owner2,Owner3</div>
<div style="left:878px;top:350px;width:62px;height:16px;background:#00E000;"></div>
<div class="t" style="left:880px;top:350px;font-size:13px;line-height:17px;color:#000;transform:scaleY(1.1);transform-origin:0 13px;color:#005500;">NONE</div>
<div class="t" style="left:943px;top:350px;font-size:13px;line-height:17px;color:#000;transform:scaleY(1.1);transform-origin:0 13px;">Yes</div>
<div class="t" style="left:2px;top:367px;width:25px;font-size:13px;line-height:17px;color:#000;transform:scaleY(1.1);transform-origin:0 13px;text-align:center;">14</div>
<div class="t" style="left:233px;top:367px;font-size:13px;line-height:17px;color:#000;transform:scaleY(1.1);transform-origin:0 13px;">1.12</div>
<div style="left:274px;top:367px;width:297px;height:16px;background:#969696;"></div>
<div class="t" style="left:288px;top:367px;font-size:13px;line-height:17px;color:#000;transform:scaleY(1.1);transform-origin:0 13px;font-weight:bold;">WBS Development</div>
<div class="t" style="left:574px;top:367px;font-size:13px;line-height:17px;color:#000;transform:scaleY(1.1);transform-origin:0 13px;font-weight:bold;">1/13/08</div>
<div class="t" style="left:624px;top:367px;font-size:13px;line-height:17px;color:#000;transform:scaleY(1.1);transform-origin:0 13px;font-weight:bold;">2/15/08</div>
<div class="t" style="left:671px;top:367px;width:58px;font-size:13px;line-height:17px;color:#000;transform:scaleY(1.1);transform-origin:0 13px;font-weight:bold;text-align:right;">25 days</div>
<div class="t" style="left:735px;top:367px;font-size:13px;line-height:17px;color:#000;transform:scaleY(1.1);transform-origin:0 13px;">Owner1,Owner2,Owner3</div>
<div class="t" style="left:2px;top:384px;width:25px;font-size:13px;line-height:17px;color:#000;transform:scaleY(1.1);transform-origin:0 13px;text-align:center;">15</div>
<div class="t" style="left:28px;top:384px;width:35px;font-size:13px;line-height:17px;color:#000;transform:scaleY(1.1);transform-origin:0 13px;text-align:right;">80%</div>
<div class="t" style="left:69px;top:384px;font-size:13px;line-height:17px;color:#000;transform:scaleY(1.1);transform-origin:0 13px;">ON SCHEDULE</div>
<div class="t" style="left:233px;top:384px;font-size:13px;line-height:17px;color:#000;transform:scaleY(1.1);transform-origin:0 13px;">1.12.1</div>
<div style="left:274px;top:384px;width:297px;height:16px;background:#C0C0C0;"></div>
<div class="t" style="left:300px;top:384px;font-size:13px;line-height:17px;color:#000;transform:scaleY(1.1);transform-origin:0 13px;">Conduct Work Breakdown Structure meeting</div>
<div class="t" style="left:574px;top:384px;font-size:13px;line-height:17px;color:#000;transform:scaleY(1.1);transform-origin:0 13px;">1/13/08</div>
<div class="t" style="left:624px;top:384px;font-size:13px;line-height:17px;color:#000;transform:scaleY(1.1);transform-origin:0 13px;">2/13/08</div>
<div class="t" style="left:671px;top:384px;width:58px;font-size:13px;line-height:17px;color:#000;transform:scaleY(1.1);transform-origin:0 13px;text-align:right;">23 days</div>
<div class="t" style="left:735px;top:384px;font-size:13px;line-height:17px;color:#000;transform:scaleY(1.1);transform-origin:0 13px;">Owner1,Owner2,Owner3</div>
<div style="left:878px;top:384px;width:62px;height:16px;background:#FFFF00;"></div>
<div class="t" style="left:880px;top:384px;font-size:13px;line-height:17px;color:#000;transform:scaleY(1.1);transform-origin:0 13px;color:#333300;">?</div>
<div class="t" style="left:2px;top:401px;width:25px;font-size:13px;line-height:17px;color:#000;transform:scaleY(1.1);transform-origin:0 13px;text-align:center;">16</div>
<div class="t" style="left:28px;top:401px;width:35px;font-size:13px;line-height:17px;color:#000;transform:scaleY(1.1);transform-origin:0 13px;text-align:right;">30%</div>
<div class="t" style="left:69px;top:401px;font-size:13px;line-height:17px;color:#000;transform:scaleY(1.1);transform-origin:0 13px;">ON SCHEDULE</div>
<div class="t" style="left:233px;top:401px;font-size:13px;line-height:17px;color:#000;transform:scaleY(1.1);transform-origin:0 13px;">1.12.2</div>
<div style="left:274px;top:401px;width:297px;height:16px;background:#C0C0C0;"></div>
<div class="t" style="left:300px;top:401px;font-size:13px;line-height:17px;color:#000;transform:scaleY(1.1);transform-origin:0 13px;">Build Work Breakdown Structure (WBS)</div>
<div class="t" style="left:574px;top:401px;font-size:13px;line-height:17px;color:#000;transform:scaleY(1.1);transform-origin:0 13px;">1/14/08</div>
<div class="t" style="left:624px;top:401px;font-size:13px;line-height:17px;color:#000;transform:scaleY(1.1);transform-origin:0 13px;">2/14/08</div>
<div class="t" style="left:671px;top:401px;width:58px;font-size:13px;line-height:17px;color:#000;transform:scaleY(1.1);transform-origin:0 13px;text-align:right;">24 days</div>
<div class="t" style="left:735px;top:401px;font-size:13px;line-height:17px;color:#000;transform:scaleY(1.1);transform-origin:0 13px;">Owner1,Owner2,Owner3</div>
<div class="t" style="left:2px;top:418px;width:25px;font-size:13px;line-height:17px;color:#000;transform:scaleY(1.1);transform-origin:0 13px;text-align:center;">17</div>
<div class="t" style="left:28px;top:418px;width:35px;font-size:13px;line-height:17px;color:#000;transform:scaleY(1.1);transform-origin:0 13px;text-align:right;">10%</div>
<div class="t" style="left:69px;top:418px;font-size:13px;line-height:17px;color:#000;transform:scaleY(1.1);transform-origin:0 13px;">ON SCHEDULE</div>
<div class="t" style="left:233px;top:418px;font-size:13px;line-height:17px;color:#000;transform:scaleY(1.1);transform-origin:0 13px;">1.12.3</div>
<div style="left:274px;top:418px;width:297px;height:16px;background:#C0C0C0;"></div>
<div class="t" style="left:300px;top:418px;font-size:13px;line-height:17px;color:#000;transform:scaleY(1.1);transform-origin:0 13px;">Update WBS in Microsoft Project</div>
<div class="t" style="left:574px;top:418px;font-size:13px;line-height:17px;color:#000;transform:scaleY(1.1);transform-origin:0 13px;">1/15/08</div>
<div class="t" style="left:624px;top:418px;font-size:13px;line-height:17px;color:#000;transform:scaleY(1.1);transform-origin:0 13px;">2/15/08</div>
<div class="t" style="left:671px;top:418px;width:58px;font-size:13px;line-height:17px;color:#000;transform:scaleY(1.1);transform-origin:0 13px;text-align:right;">24 days</div>
<div class="t" style="left:735px;top:418px;font-size:13px;line-height:17px;color:#000;transform:scaleY(1.1);transform-origin:0 13px;">Owner1,Owner2,Owner3</div>
<div class="t" style="left:2px;top:435px;width:25px;font-size:13px;line-height:17px;color:#000;transform:scaleY(1.1);transform-origin:0 13px;text-align:center;">18</div>
<div class="t" style="left:28px;top:435px;width:35px;font-size:13px;line-height:17px;color:#000;transform:scaleY(1.1);transform-origin:0 13px;text-align:right;">100%</div>
<div class="t" style="left:69px;top:435px;font-size:13px;line-height:17px;color:#000;transform:scaleY(1.1);transform-origin:0 13px;color:#33C833;">COMPLETED</div>
<div style="left:69px;top:445px;width:80px;height:1px;background:#33C833;"></div>
<div class="t" style="left:233px;top:435px;font-size:13px;line-height:17px;color:#000;transform:scaleY(1.1);transform-origin:0 13px;">1.13</div>
<div class="t" style="left:288px;top:435px;font-size:13px;line-height:17px;color:#000;transform:scaleY(1.1);transform-origin:0 13px;">Outline project plan</div>
<div class="t" style="left:574px;top:435px;font-size:13px;line-height:17px;color:#000;transform:scaleY(1.1);transform-origin:0 13px;">1/16/08</div>
<div class="t" style="left:624px;top:435px;font-size:13px;line-height:17px;color:#000;transform:scaleY(1.1);transform-origin:0 13px;">2/16/08</div>
<div class="t" style="left:671px;top:435px;width:58px;font-size:13px;line-height:17px;color:#000;transform:scaleY(1.1);transform-origin:0 13px;text-align:right;">23 days</div>
<div class="t" style="left:735px;top:435px;font-size:13px;line-height:17px;color:#000;transform:scaleY(1.1);transform-origin:0 13px;">Owner1,Owner2,Owner3</div>
<div class="t" style="left:2px;top:452px;width:25px;font-size:13px;line-height:17px;color:#000;transform:scaleY(1.1);transform-origin:0 13px;text-align:center;">19</div>
<div class="t" style="left:28px;top:452px;width:35px;font-size:13px;line-height:17px;color:#000;transform:scaleY(1.1);transform-origin:0 13px;text-align:right;">100%</div>
<div class="t" style="left:69px;top:452px;font-size:13px;line-height:17px;color:#000;transform:scaleY(1.1);transform-origin:0 13px;color:#33C833;">COMPLETED</div>
<div style="left:69px;top:462px;width:80px;height:1px;background:#33C833;"></div>
<div class="t" style="left:233px;top:452px;font-size:13px;line-height:17px;color:#000;transform:scaleY(1.1);transform-origin:0 13px;">1.14</div>
<div class="t" style="left:288px;top:452px;font-size:13px;line-height:17px;color:#000;transform:scaleY(1.1);transform-origin:0 13px;">Assign resources to project plan tasks</div>
<div class="t" style="left:574px;top:452px;font-size:13px;line-height:17px;color:#000;transform:scaleY(1.1);transform-origin:0 13px;">1/17/08</div>
<div class="t" style="left:624px;top:452px;font-size:13px;line-height:17px;color:#000;transform:scaleY(1.1);transform-origin:0 13px;">2/17/08</div>
<div class="t" style="left:671px;top:452px;width:58px;font-size:13px;line-height:17px;color:#000;transform:scaleY(1.1);transform-origin:0 13px;text-align:right;">22 days</div>
<div class="t" style="left:735px;top:452px;font-size:13px;line-height:17px;color:#000;transform:scaleY(1.1);transform-origin:0 13px;">Owner1,Owner2,Owner3</div>
<div class="t" style="left:2px;top:469px;width:25px;font-size:13px;line-height:17px;color:#000;transform:scaleY(1.1);transform-origin:0 13px;text-align:center;">20</div>
<div class="t" style="left:233px;top:469px;font-size:13px;line-height:17px;color:#000;transform:scaleY(1.1);transform-origin:0 13px;">2</div>
<div style="left:274px;top:469px;width:297px;height:16px;background:#00CCFF;"></div>
<div class="t" style="left:276px;top:469px;font-size:13px;line-height:17px;color:#000;transform:scaleY(1.1);transform-origin:0 13px;font-weight:bold;color:#001F60;">Analysis</div>
<div class="t" style="left:574px;top:469px;font-size:13px;line-height:17px;color:#000;transform:scaleY(1.1);transform-origin:0 13px;font-weight:bold;">1/19/08</div>
<div class="t" style="left:624px;top:469px;font-size:13px;line-height:17px;color:#000;transform:scaleY(1.1);transform-origin:0 13px;font-weight:bold;">2/22/08</div>
<div class="t" style="left:671px;top:469px;width:58px;font-size:13px;line-height:17px;color:#000;transform:scaleY(1.1);transform-origin:0 13px;font-weight:bold;text-align:right;">25 days</div>
<div class="t" style="left:735px;top:469px;font-size:13px;line-height:17px;color:#000;transform:scaleY(1.1);transform-origin:0 13px;">Owner1,Owner2,Owner3</div>
<div class="t" style="left:2px;top:486px;width:25px;font-size:13px;line-height:17px;color:#000;transform:scaleY(1.1);transform-origin:0 13px;text-align:center;">21</div>
<div class="t" style="left:28px;top:486px;width:35px;font-size:13px;line-height:17px;color:#000;transform:scaleY(1.1);transform-origin:0 13px;text-align:right;">0%</div>
<div class="t" style="left:69px;top:486px;font-size:13px;line-height:17px;color:#000;transform:scaleY(1.1);transform-origin:0 13px;">FUTURE TASK</div>
<div class="t" style="left:233px;top:486px;font-size:13px;line-height:17px;color:#000;transform:scaleY(1.1);transform-origin:0 13px;">2.1</div>
<div class="t" style="left:288px;top:486px;font-size:13px;line-height:17px;color:#000;transform:scaleY(1.1);transform-origin:0 13px;">Create Entity Relationship Diagram</div>
<div class="t" style="left:574px;top:486px;font-size:13px;line-height:17px;color:#000;transform:scaleY(1.1);transform-origin:0 13px;">1/19/08</div>
<div class="t" style="left:624px;top:486px;font-size:13px;line-height:17px;color:#000;transform:scaleY(1.1);transform-origin:0 13px;">2/19/08</div>
<div class="t" style="left:671px;top:486px;width:58px;font-size:13px;line-height:17px;color:#000;transform:scaleY(1.1);transform-origin:0 13px;text-align:right;">22 days</div>
<div class="t" style="left:735px;top:486px;font-size:13px;line-height:17px;color:#000;transform:scaleY(1.1);transform-origin:0 13px;">Owner1,Owner2,Owner3</div>
<div class="t" style="left:2px;top:503px;width:25px;font-size:13px;line-height:17px;color:#000;transform:scaleY(1.1);transform-origin:0 13px;text-align:center;">22</div>
<div class="t" style="left:28px;top:503px;width:35px;font-size:13px;line-height:17px;color:#000;transform:scaleY(1.1);transform-origin:0 13px;text-align:right;">100%</div>
<div class="t" style="left:69px;top:503px;font-size:13px;line-height:17px;color:#000;transform:scaleY(1.1);transform-origin:0 13px;color:#33C833;">COMPLETED</div>
<div style="left:69px;top:513px;width:80px;height:1px;background:#33C833;"></div>
<div class="t" style="left:233px;top:503px;font-size:13px;line-height:17px;color:#000;transform:scaleY(1.1);transform-origin:0 13px;">2.2</div>
<div class="t" style="left:288px;top:503px;font-size:13px;line-height:17px;color:#000;transform:scaleY(1.1);transform-origin:0 13px;">Create Data Flow Diagram</div>
<div class="t" style="left:574px;top:503px;font-size:13px;line-height:17px;color:#000;transform:scaleY(1.1);transform-origin:0 13px;">1/20/08</div>
<div class="t" style="left:624px;top:503px;font-size:13px;line-height:17px;color:#000;transform:scaleY(1.1);transform-origin:0 13px;">2/20/08</div>
<div class="t" style="left:671px;top:503px;width:58px;font-size:13px;line-height:17px;color:#000;transform:scaleY(1.1);transform-origin:0 13px;text-align:right;">23 days</div>
<div class="t" style="left:735px;top:503px;font-size:13px;line-height:17px;color:#000;transform:scaleY(1.1);transform-origin:0 13px;">Owner1,Owner2,Owner3</div>
<div class="t" style="left:2px;top:520px;width:25px;font-size:13px;line-height:17px;color:#000;transform:scaleY(1.1);transform-origin:0 13px;text-align:center;">23</div>
<div class="t" style="left:28px;top:520px;width:35px;font-size:13px;line-height:17px;color:#000;transform:scaleY(1.1);transform-origin:0 13px;text-align:right;">0%</div>
<div class="t" style="left:69px;top:520px;font-size:13px;line-height:17px;color:#000;transform:scaleY(1.1);transform-origin:0 13px;">FUTURE TASK</div>
<div class="t" style="left:233px;top:520px;font-size:13px;line-height:17px;color:#000;transform:scaleY(1.1);transform-origin:0 13px;">2.3</div>
<div class="t" style="left:288px;top:520px;font-size:13px;line-height:17px;color:#000;transform:scaleY(1.1);transform-origin:0 13px;">Define data dictionary</div>
<div class="t" style="left:574px;top:520px;font-size:13px;line-height:17px;color:#000;transform:scaleY(1.1);transform-origin:0 13px;">1/21/08</div>
<div class="t" style="left:624px;top:520px;font-size:13px;line-height:17px;color:#000;transform:scaleY(1.1);transform-origin:0 13px;">2/21/08</div>
<div class="t" style="left:671px;top:520px;width:58px;font-size:13px;line-height:17px;color:#000;transform:scaleY(1.1);transform-origin:0 13px;text-align:right;">24 days</div>
<div class="t" style="left:735px;top:520px;font-size:13px;line-height:17px;color:#000;transform:scaleY(1.1);transform-origin:0 13px;">Owner1,Owner2,Owner3</div>
<div class="t" style="left:2px;top:537px;width:25px;font-size:13px;line-height:17px;color:#000;transform:scaleY(1.1);transform-origin:0 13px;text-align:center;">24</div>
<div class="t" style="left:28px;top:537px;width:35px;font-size:13px;line-height:17px;color:#000;transform:scaleY(1.1);transform-origin:0 13px;text-align:right;">0%</div>
<div class="t" style="left:69px;top:537px;font-size:13px;line-height:17px;color:#000;transform:scaleY(1.1);transform-origin:0 13px;">FUTURE TASK</div>
<div class="t" style="left:233px;top:537px;font-size:13px;line-height:17px;color:#000;transform:scaleY(1.1);transform-origin:0 13px;">2.4</div>
<div class="t" style="left:288px;top:537px;font-size:13px;line-height:17px;color:#000;transform:scaleY(1.1);transform-origin:0 13px;">Perform object-oriented analysis</div>
<div class="t" style="left:574px;top:537px;font-size:13px;line-height:17px;color:#000;transform:scaleY(1.1);transform-origin:0 13px;">1/22/08</div>
<div class="t" style="left:624px;top:537px;font-size:13px;line-height:17px;color:#000;transform:scaleY(1.1);transform-origin:0 13px;">2/22/08</div>
<div class="t" style="left:671px;top:537px;width:58px;font-size:13px;line-height:17px;color:#000;transform:scaleY(1.1);transform-origin:0 13px;text-align:right;">24 days</div>
<div class="t" style="left:735px;top:537px;font-size:13px;line-height:17px;color:#000;transform:scaleY(1.1);transform-origin:0 13px;">Owner1,Owner2,Owner3</div>
<div class="t" style="left:2px;top:554px;width:25px;font-size:13px;line-height:17px;color:#000;transform:scaleY(1.1);transform-origin:0 13px;text-align:center;">25</div>
<div class="t" style="left:233px;top:554px;font-size:13px;line-height:17px;color:#000;transform:scaleY(1.1);transform-origin:0 13px;">3</div>
<div style="left:274px;top:554px;width:297px;height:16px;background:#00CCFF;"></div>
<div class="t" style="left:276px;top:554px;font-size:13px;line-height:17px;color:#000;transform:scaleY(1.1);transform-origin:0 13px;font-weight:bold;color:#001F60;">Design</div>
<div class="t" style="left:574px;top:554px;font-size:13px;line-height:17px;color:#000;transform:scaleY(1.1);transform-origin:0 13px;font-weight:bold;">1/24/08</div>
<div class="t" style="left:624px;top:554px;font-size:13px;line-height:17px;color:#000;transform:scaleY(1.1);transform-origin:0 13px;font-weight:bold;">3/5/08</div>
<div class="t" style="left:671px;top:554px;width:58px;font-size:13px;line-height:17px;color:#000;transform:scaleY(1.1);transform-origin:0 13px;font-weight:bold;text-align:right;">30 days</div>
<div class="t" style="left:735px;top:554px;font-size:13px;line-height:17px;color:#000;transform:scaleY(1.1);transform-origin:0 13px;">Owner1,Owner2,Owner3</div>
<div class="t" style="left:2px;top:571px;width:25px;font-size:13px;line-height:17px;color:#000;transform:scaleY(1.1);transform-origin:0 13px;text-align:center;">26</div>
<div class="t" style="left:28px;top:571px;width:35px;font-size:13px;line-height:17px;color:#000;transform:scaleY(1.1);transform-origin:0 13px;text-align:right;">0%</div>
<div class="t" style="left:69px;top:571px;font-size:13px;line-height:17px;color:#000;transform:scaleY(1.1);transform-origin:0 13px;">FUTURE TASK</div>
<div class="t" style="left:233px;top:571px;font-size:13px;line-height:17px;color:#000;transform:scaleY(1.1);transform-origin:0 13px;">3.1</div>
<div class="t" style="left:288px;top:571px;font-size:13px;line-height:17px;color:#000;transform:scaleY(1.1);transform-origin:0 13px;">Design data model</div>
<div class="t" style="left:574px;top:571px;font-size:13px;line-height:17px;color:#000;transform:scaleY(1.1);transform-origin:0 13px;">1/24/08</div>
<div class="t" style="left:624px;top:571px;font-size:13px;line-height:17px;color:#000;transform:scaleY(1.1);transform-origin:0 13px;">2/24/08</div>
<div class="t" style="left:671px;top:571px;width:58px;font-size:13px;line-height:17px;color:#000;transform:scaleY(1.1);transform-origin:0 13px;text-align:right;">22 days</div>
<div class="t" style="left:735px;top:571px;font-size:13px;line-height:17px;color:#000;transform:scaleY(1.1);transform-origin:0 13px;">Owner1,Owner2,Owner3</div>
<div class="t" style="left:2px;top:588px;width:25px;font-size:13px;line-height:17px;color:#000;transform:scaleY(1.1);transform-origin:0 13px;text-align:center;">27</div>
<div class="t" style="left:28px;top:588px;width:35px;font-size:13px;line-height:17px;color:#000;transform:scaleY(1.1);transform-origin:0 13px;text-align:right;">0%</div>
<div class="t" style="left:69px;top:588px;font-size:13px;line-height:17px;color:#000;transform:scaleY(1.1);transform-origin:0 13px;">FUTURE TASK</div>
<div class="t" style="left:233px;top:588px;font-size:13px;line-height:17px;color:#000;transform:scaleY(1.1);transform-origin:0 13px;">3.2</div>
<div class="t" style="left:288px;top:588px;font-size:13px;line-height:17px;color:#000;transform:scaleY(1.1);transform-origin:0 13px;">Write functional specifications</div>
<div class="t" style="left:574px;top:588px;font-size:13px;line-height:17px;color:#000;transform:scaleY(1.1);transform-origin:0 13px;">1/25/08</div>
<div class="t" style="left:624px;top:588px;font-size:13px;line-height:17px;color:#000;transform:scaleY(1.1);transform-origin:0 13px;">2/25/08</div>
<div class="t" style="left:671px;top:588px;width:58px;font-size:13px;line-height:17px;color:#000;transform:scaleY(1.1);transform-origin:0 13px;text-align:right;">22 days</div>
<div class="t" style="left:735px;top:588px;font-size:13px;line-height:17px;color:#000;transform:scaleY(1.1);transform-origin:0 13px;">Owner1,Owner2,Owner3</div>
<div class="t" style="left:2px;top:605px;width:25px;font-size:13px;line-height:17px;color:#000;transform:scaleY(1.1);transform-origin:0 13px;text-align:center;">28</div>
<div class="t" style="left:28px;top:605px;width:35px;font-size:13px;line-height:17px;color:#000;transform:scaleY(1.1);transform-origin:0 13px;text-align:right;">0%</div>
<div class="t" style="left:69px;top:605px;font-size:13px;line-height:17px;color:#000;transform:scaleY(1.1);transform-origin:0 13px;">FUTURE TASK</div>
<div class="t" style="left:233px;top:605px;font-size:13px;line-height:17px;color:#000;transform:scaleY(1.1);transform-origin:0 13px;">3.3</div>
<div class="t" style="left:288px;top:605px;font-size:13px;line-height:17px;color:#000;transform:scaleY(1.1);transform-origin:0 13px;">Design storyboards and/or prototypes</div>
<div class="t" style="left:574px;top:605px;font-size:13px;line-height:17px;color:#000;transform:scaleY(1.1);transform-origin:0 13px;">1/26/08</div>
<div class="t" style="left:624px;top:605px;font-size:13px;line-height:17px;color:#000;transform:scaleY(1.1);transform-origin:0 13px;">2/26/08</div>
<div class="t" style="left:671px;top:605px;width:58px;font-size:13px;line-height:17px;color:#000;transform:scaleY(1.1);transform-origin:0 13px;text-align:right;">22 days</div>
<div class="t" style="left:735px;top:605px;font-size:13px;line-height:17px;color:#000;transform:scaleY(1.1);transform-origin:0 13px;">Owner1,Owner2,Owner3</div>
<div class="t" style="left:2px;top:622px;width:25px;font-size:13px;line-height:17px;color:#000;transform:scaleY(1.1);transform-origin:0 13px;text-align:center;">29</div>
<div class="t" style="left:28px;top:622px;width:35px;font-size:13px;line-height:17px;color:#000;transform:scaleY(1.1);transform-origin:0 13px;text-align:right;">0%</div>
<div class="t" style="left:69px;top:622px;font-size:13px;line-height:17px;color:#000;transform:scaleY(1.1);transform-origin:0 13px;">FUTURE TASK</div>
<div class="t" style="left:233px;top:622px;font-size:13px;line-height:17px;color:#000;transform:scaleY(1.1);transform-origin:0 13px;">3.4</div>
<div class="t" style="left:288px;top:622px;font-size:13px;line-height:17px;color:#000;transform:scaleY(1.1);transform-origin:0 13px;">Write detailed design specifications</div>
<div class="t" style="left:574px;top:622px;font-size:13px;line-height:17px;color:#000;transform:scaleY(1.1);transform-origin:0 13px;">1/27/08</div>
<div class="t" style="left:624px;top:622px;font-size:13px;line-height:17px;color:#000;transform:scaleY(1.1);transform-origin:0 13px;">2/27/08</div>
<div class="t" style="left:671px;top:622px;width:58px;font-size:13px;line-height:17px;color:#000;transform:scaleY(1.1);transform-origin:0 13px;text-align:right;">23 days</div>
<div class="t" style="left:735px;top:622px;font-size:13px;line-height:17px;color:#000;transform:scaleY(1.1);transform-origin:0 13px;">Owner1,Owner2,Owner3</div>
<div class="t" style="left:2px;top:639px;width:25px;font-size:13px;line-height:17px;color:#000;transform:scaleY(1.1);transform-origin:0 13px;text-align:center;">30</div>
<div class="t" style="left:28px;top:639px;width:35px;font-size:13px;line-height:17px;color:#000;transform:scaleY(1.1);transform-origin:0 13px;text-align:right;">0%</div>
<div class="t" style="left:69px;top:639px;font-size:13px;line-height:17px;color:#000;transform:scaleY(1.1);transform-origin:0 13px;">FUTURE TASK</div>
<div class="t" style="left:233px;top:639px;font-size:13px;line-height:17px;color:#000;transform:scaleY(1.1);transform-origin:0 13px;">3.5</div>
<div class="t" style="left:288px;top:639px;font-size:13px;line-height:17px;color:#000;transform:scaleY(1.1);transform-origin:0 13px;">Write documentation plan</div>
<div class="t" style="left:574px;top:639px;font-size:13px;line-height:17px;color:#000;transform:scaleY(1.1);transform-origin:0 13px;">1/28/08</div>
<div class="t" style="left:624px;top:639px;font-size:13px;line-height:17px;color:#000;transform:scaleY(1.1);transform-origin:0 13px;">2/28/08</div>
<div class="t" style="left:671px;top:639px;width:58px;font-size:13px;line-height:17px;color:#000;transform:scaleY(1.1);transform-origin:0 13px;text-align:right;">24 days</div>
<div class="t" style="left:735px;top:639px;font-size:13px;line-height:17px;color:#000;transform:scaleY(1.1);transform-origin:0 13px;">Owner1,Owner2,Owner3</div>
<div class="t" style="left:2px;top:656px;width:25px;font-size:13px;line-height:17px;color:#000;transform:scaleY(1.1);transform-origin:0 13px;text-align:center;">31</div>
<div class="t" style="left:28px;top:656px;width:35px;font-size:13px;line-height:17px;color:#000;transform:scaleY(1.1);transform-origin:0 13px;text-align:right;">100%</div>
<div class="t" style="left:69px;top:656px;font-size:13px;line-height:17px;color:#000;transform:scaleY(1.1);transform-origin:0 13px;color:#33C833;">COMPLETED</div>
<div style="left:69px;top:666px;width:80px;height:1px;background:#33C833;"></div>
<div class="t" style="left:233px;top:656px;font-size:13px;line-height:17px;color:#000;transform:scaleY(1.1);transform-origin:0 13px;">3.6</div>
<div class="t" style="left:288px;top:656px;font-size:13px;line-height:17px;color:#000;transform:scaleY(1.1);transform-origin:0 13px;">Write beta test plan</div>
<div class="t" style="left:574px;top:656px;font-size:13px;line-height:17px;color:#000;transform:scaleY(1.1);transform-origin:0 13px;">1/29/08</div>
<div class="t" style="left:624px;top:656px;font-size:13px;line-height:17px;color:#000;transform:scaleY(1.1);transform-origin:0 13px;">2/29/08</div>
<div class="t" style="left:671px;top:656px;width:58px;font-size:13px;line-height:17px;color:#000;transform:scaleY(1.1);transform-origin:0 13px;text-align:right;">24 days</div>
<div class="t" style="left:735px;top:656px;font-size:13px;line-height:17px;color:#000;transform:scaleY(1.1);transform-origin:0 13px;">Owner1,Owner2,Owner3</div>
<div class="t" style="left:2px;top:673px;width:25px;font-size:13px;line-height:17px;color:#000;transform:scaleY(1.1);transform-origin:0 13px;text-align:center;">32</div>
<div class="t" style="left:28px;top:673px;width:35px;font-size:13px;line-height:17px;color:#000;transform:scaleY(1.1);transform-origin:0 13px;text-align:right;">0%</div>
<div class="t" style="left:69px;top:673px;font-size:13px;line-height:17px;color:#000;transform:scaleY(1.1);transform-origin:0 13px;">FUTURE TASK</div>
<div class="t" style="left:233px;top:673px;font-size:13px;line-height:17px;color:#000;transform:scaleY(1.1);transform-origin:0 13px;">3.7</div>
<div class="t" style="left:288px;top:673px;font-size:13px;line-height:17px;color:#000;transform:scaleY(1.1);transform-origin:0 13px;">Write SQA test plan</div>
<div class="t" style="left:574px;top:673px;font-size:13px;line-height:17px;color:#000;transform:scaleY(1.1);transform-origin:0 13px;">1/30/08</div>
<div class="t" style="left:624px;top:673px;font-size:13px;line-height:17px;color:#000;transform:scaleY(1.1);transform-origin:0 13px;">3/1/08</div>
<div class="t" style="left:671px;top:673px;width:58px;font-size:13px;line-height:17px;color:#000;transform:scaleY(1.1);transform-origin:0 13px;text-align:right;">23 days</div>
<div class="t" style="left:735px;top:673px;font-size:13px;line-height:17px;color:#000;transform:scaleY(1.1);transform-origin:0 13px;">Owner1,Owner2,Owner3</div>
<div class="t" style="left:2px;top:690px;width:25px;font-size:13px;line-height:17px;color:#000;transform:scaleY(1.1);transform-origin:0 13px;text-align:center;">33</div>
<div class="t" style="left:28px;top:690px;width:35px;font-size:13px;line-height:17px;color:#000;transform:scaleY(1.1);transform-origin:0 13px;text-align:right;">0%</div>
<div class="t" style="left:69px;top:690px;font-size:13px;line-height:17px;color:#000;transform:scaleY(1.1);transform-origin:0 13px;">FUTURE TASK</div>
<div class="t" style="left:233px;top:690px;font-size:13px;line-height:17px;color:#000;transform:scaleY(1.1);transform-origin:0 13px;">3.8</div>
<div class="t" style="left:288px;top:690px;font-size:13px;line-height:17px;color:#000;transform:scaleY(1.1);transform-origin:0 13px;">Write SQA test cases</div>
<div class="t" style="left:574px;top:690px;font-size:13px;line-height:17px;color:#000;transform:scaleY(1.1);transform-origin:0 13px;">1/31/08</div>
<div class="t" style="left:624px;top:690px;font-size:13px;line-height:17px;color:#000;transform:scaleY(1.1);transform-origin:0 13px;">2/3/08</div>
<div class="t" style="left:671px;top:690px;width:58px;font-size:13px;line-height:17px;color:#000;transform:scaleY(1.1);transform-origin:0 13px;text-align:right;">23 days</div>
<div class="t" style="left:735px;top:690px;font-size:13px;line-height:17px;color:#000;transform:scaleY(1.1);transform-origin:0 13px;">Owner1,Owner2,Owner3</div>
<div style="left:66px;top:111px;width:1px;height:586px;background:#000;"></div>
<div style="left:197px;top:111px;width:1px;height:586px;background:#000;"></div>
<div style="left:230px;top:111px;width:1px;height:586px;background:#000;"></div>
<div style="left:273px;top:111px;width:1px;height:586px;background:#000;"></div>
<div style="left:571px;top:111px;width:1px;height:586px;background:#000;"></div>
<div style="left:621px;top:111px;width:1px;height:586px;background:#000;"></div>
<div style="left:671px;top:111px;width:1px;height:586px;background:#000;"></div>
<div style="left:732px;top:111px;width:1px;height:586px;background:#000;"></div>
<div style="left:877px;top:111px;width:1px;height:586px;background:#000;"></div>
<div style="left:940px;top:111px;width:1px;height:586px;background:#000;"></div>
<div style="left:28px;top:162px;width:978px;height:1px;background:#000;"></div>
<div style="left:2px;top:162px;width:25px;height:1px;background:#ACA899;"></div>
<div style="left:28px;top:179px;width:978px;height:1px;background:#000;"></div>
<div style="left:2px;top:179px;width:25px;height:1px;background:#ACA899;"></div>
<div style="left:28px;top:196px;width:978px;height:1px;background:#000;"></div>
<div style="left:2px;top:196px;width:25px;height:1px;background:#ACA899;"></div>
<div style="left:28px;top:213px;width:978px;height:1px;background:#000;"></div>
<div style="left:2px;top:213px;width:25px;height:1px;background:#ACA899;"></div>
<div style="left:28px;top:230px;width:978px;height:1px;background:#000;"></div>
<div style="left:2px;top:230px;width:25px;height:1px;background:#ACA899;"></div>
<div style="left:28px;top:247px;width:978px;height:1px;background:#000;"></div>
<div style="left:2px;top:247px;width:25px;height:1px;background:#ACA899;"></div>
<div style="left:28px;top:264px;width:978px;height:1px;background:#000;"></div>
<div style="left:2px;top:264px;width:25px;height:1px;background:#ACA899;"></div>
<div style="left:28px;top:281px;width:978px;height:1px;background:#000;"></div>
<div style="left:2px;top:281px;width:25px;height:1px;background:#ACA899;"></div>
<div style="left:28px;top:298px;width:978px;height:1px;background:#000;"></div>
<div style="left:2px;top:298px;width:25px;height:1px;background:#ACA899;"></div>
<div style="left:28px;top:315px;width:978px;height:1px;background:#000;"></div>
<div style="left:2px;top:315px;width:25px;height:1px;background:#ACA899;"></div>
<div style="left:28px;top:332px;width:978px;height:1px;background:#000;"></div>
<div style="left:2px;top:332px;width:25px;height:1px;background:#ACA899;"></div>
<div style="left:28px;top:349px;width:978px;height:1px;background:#000;"></div>
<div style="left:2px;top:349px;width:25px;height:1px;background:#ACA899;"></div>
<div style="left:28px;top:366px;width:978px;height:1px;background:#000;"></div>
<div style="left:2px;top:366px;width:25px;height:1px;background:#ACA899;"></div>
<div style="left:28px;top:383px;width:978px;height:1px;background:#000;"></div>
<div style="left:2px;top:383px;width:25px;height:1px;background:#ACA899;"></div>
<div style="left:28px;top:400px;width:978px;height:1px;background:#000;"></div>
<div style="left:2px;top:400px;width:25px;height:1px;background:#ACA899;"></div>
<div style="left:28px;top:417px;width:978px;height:1px;background:#000;"></div>
<div style="left:2px;top:417px;width:25px;height:1px;background:#ACA899;"></div>
<div style="left:28px;top:434px;width:978px;height:1px;background:#000;"></div>
<div style="left:2px;top:434px;width:25px;height:1px;background:#ACA899;"></div>
<div style="left:28px;top:451px;width:978px;height:1px;background:#000;"></div>
<div style="left:2px;top:451px;width:25px;height:1px;background:#ACA899;"></div>
<div style="left:28px;top:468px;width:978px;height:1px;background:#000;"></div>
<div style="left:2px;top:468px;width:25px;height:1px;background:#ACA899;"></div>
<div style="left:28px;top:485px;width:978px;height:1px;background:#000;"></div>
<div style="left:2px;top:485px;width:25px;height:1px;background:#ACA899;"></div>
<div style="left:28px;top:502px;width:978px;height:1px;background:#000;"></div>
<div style="left:2px;top:502px;width:25px;height:1px;background:#ACA899;"></div>
<div style="left:28px;top:519px;width:978px;height:1px;background:#000;"></div>
<div style="left:2px;top:519px;width:25px;height:1px;background:#ACA899;"></div>
<div style="left:28px;top:536px;width:978px;height:1px;background:#000;"></div>
<div style="left:2px;top:536px;width:25px;height:1px;background:#ACA899;"></div>
<div style="left:28px;top:553px;width:978px;height:1px;background:#000;"></div>
<div style="left:2px;top:553px;width:25px;height:1px;background:#ACA899;"></div>
<div style="left:28px;top:570px;width:978px;height:1px;background:#000;"></div>
<div style="left:2px;top:570px;width:25px;height:1px;background:#ACA899;"></div>
<div style="left:28px;top:587px;width:978px;height:1px;background:#000;"></div>
<div style="left:2px;top:587px;width:25px;height:1px;background:#ACA899;"></div>
<div style="left:28px;top:604px;width:978px;height:1px;background:#000;"></div>
<div style="left:2px;top:604px;width:25px;height:1px;background:#ACA899;"></div>
<div style="left:28px;top:621px;width:978px;height:1px;background:#000;"></div>
<div style="left:2px;top:621px;width:25px;height:1px;background:#ACA899;"></div>
<div style="left:28px;top:638px;width:978px;height:1px;background:#000;"></div>
<div style="left:2px;top:638px;width:25px;height:1px;background:#ACA899;"></div>
<div style="left:28px;top:655px;width:978px;height:1px;background:#000;"></div>
<div style="left:2px;top:655px;width:25px;height:1px;background:#ACA899;"></div>
<div style="left:28px;top:672px;width:978px;height:1px;background:#000;"></div>
<div style="left:2px;top:672px;width:25px;height:1px;background:#ACA899;"></div>
<div style="left:28px;top:689px;width:978px;height:1px;background:#000;"></div>
<div style="left:2px;top:689px;width:25px;height:1px;background:#ACA899;"></div>
<div style="left:1006px;top:93px;width:18px;height:620px;background:#ECE9D8;"></div>
<svg style="left:1006px;top:110px" width="16" height="572"><defs><pattern id="ck" width="2" height="2" patternUnits="userSpaceOnUse"><rect width="2" height="2" fill="#fff"/><rect width="1" height="1" fill="#000"/><rect x="1" y="1" width="1" height="1" fill="#000"/></pattern></defs><rect width="16" height="572" fill="url(#ck)"/></svg>
<div style="left:1006px;top:93px;width:16px;height:17px;background:#ECE9D8;border-top:1px solid #fff;border-left:1px solid #fff;border-right:1px solid #716F64;border-bottom:1px solid #716F64;box-sizing:border-box;"></div>
<svg style="left:1010px;top:99px" width="8" height="5" viewBox="0 0 8 5"><path d="M0 4.5 L4 0.5 L8 4.5 Z" fill="#000"/></svg>
<div style="left:1006px;top:110px;width:16px;height:186px;background:#ECE9D8;border-top:1px solid #fff;border-left:1px solid #fff;border-right:1px solid #716F64;border-bottom:1px solid #716F64;box-sizing:border-box;"></div>
<div style="left:1006px;top:682px;width:16px;height:15px;background:#ECE9D8;border-top:1px solid #fff;border-left:1px solid #fff;border-right:1px solid #716F64;border-bottom:1px solid #716F64;box-sizing:border-box;"></div>
<svg style="left:1010px;top:687px" width="8" height="5" viewBox="0 0 8 5"><path d="M0 0.5 L8 0.5 L4 4.5 Z" fill="#000"/></svg>
<div style="left:0px;top:697px;width:1006px;height:16px;background:#ECE9D8;"></div>
<div style="left:0px;top:697px;width:2px;height:16px;background:#9D9A8A;"></div>
<div style="left:2px;top:697px;width:16px;height:16px;background:#ECE9D8;border-top:1px solid #fff;border-left:1px solid #fff;border-right:1px solid #716F64;border-bottom:1px solid #716F64;box-sizing:border-box;"></div>
<svg style="left:7px;top:701px" width="5" height="8" viewBox="0 0 5 8"><path d="M4.5 0 V8 L0.5 4 Z" fill="#000"/></svg>
<div style="left:18px;top:697px;width:1px;height:16px;background:#716F64;"></div>
<div style="left:19px;top:712px;width:679px;height:1px;background:#716F64;"></div>
<svg style="left:698px;top:697px" width="292" height="16"><rect width="292" height="16" fill="url(#ck)"/></svg>
<div style="left:990px;top:697px;width:16px;height:16px;background:#ECE9D8;border-top:1px solid #fff;border-left:1px solid #fff;border-right:1px solid #716F64;border-bottom:1px solid #716F64;box-sizing:border-box;"></div>
<svg style="left:996px;top:701px" width="5" height="8" viewBox="0 0 5 8"><path d="M0.5 0 V8 L4.5 4 Z" fill="#000"/></svg>
<div style="left:1006px;top:697px;width:16px;height:16px;background:#ECE9D8;border-top:1px solid #fff;border-left:1px solid #fff;border-right:1px solid #716F64;border-bottom:1px solid #716F64;box-sizing:border-box;"></div>
<div style="left:1022px;top:93px;width:2px;height:620px;background:#F8F7F0;"></div>
<div style="left:1006px;top:93px;width:16px;height:1px;background:#716F64;"></div>
<div style="left:0px;top:713px;width:1024px;height:21px;background:#ECE9D8;"></div>
<div class="t" style="left:6px;top:718px;font-size:12px;line-height:15px;">Ready</div>
<div style="left:654px;top:716px;width:1px;height:17px;background:#ACA899;"></div>
<div style="left:655px;top:716px;width:1px;height:17px;background:#fff;"></div>
<div style="left:662px;top:718px;width:34px;height:15px;border-top:1px solid #ACA899;border-left:1px solid #ACA899;border-right:1px solid #fff;border-bottom:1px solid #fff;box-sizing:border-box;"></div>
<div style="left:698px;top:718px;width:130px;height:15px;border-top:1px solid #ACA899;border-left:1px solid #ACA899;border-right:1px solid #fff;border-bottom:1px solid #fff;box-sizing:border-box;"></div>
<div style="left:830px;top:718px;width:27px;height:15px;border-top:1px solid #ACA899;border-left:1px solid #ACA899;border-right:1px solid #fff;border-bottom:1px solid #fff;box-sizing:border-box;"></div>
<div style="left:859px;top:718px;width:36px;height:15px;border-top:1px solid #ACA899;border-left:1px solid #ACA899;border-right:1px solid #fff;border-bottom:1px solid #fff;box-sizing:border-box;"></div>
<div style="left:897px;top:718px;width:29px;height:15px;border-top:1px solid #ACA899;border-left:1px solid #ACA899;border-right:1px solid #fff;border-bottom:1px solid #fff;box-sizing:border-box;"></div>
<div style="left:928px;top:718px;width:34px;height:15px;border-top:1px solid #ACA899;border-left:1px solid #ACA899;border-right:1px solid #fff;border-bottom:1px solid #fff;box-sizing:border-box;"></div>
<div style="left:964px;top:718px;width:29px;height:15px;border-top:1px solid #ACA899;border-left:1px solid #ACA899;border-right:1px solid #fff;border-bottom:1px solid #fff;box-sizing:border-box;"></div>
<div style="left:995px;top:718px;width:22px;height:15px;border-top:1px solid #ACA899;border-left:1px solid #ACA899;border-right:1px solid #fff;border-bottom:1px solid #fff;box-sizing:border-box;"></div>
<div style="left:0px;top:734px;width:1024px;height:4px;background:#3A6FD8;"></div>
</body></html>
